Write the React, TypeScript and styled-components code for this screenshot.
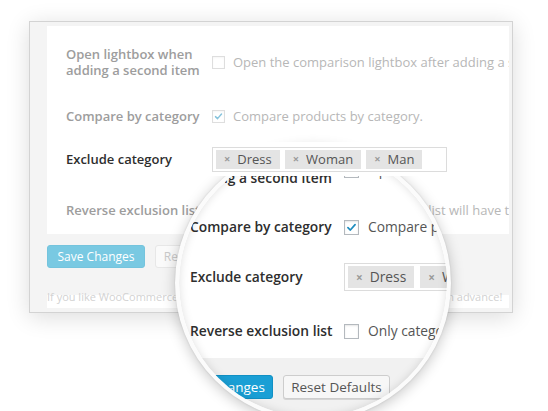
import React from "react";
import styled, { createGlobalStyle, css } from "styled-components";

const GlobalStyle = createGlobalStyle`
  html, body { margin: 0; padding: 0; background: #fff; }
  body { font-family: "Open Sans", "Liberation Sans", sans-serif; }
  *, *::before, *::after { box-sizing: border-box; }
`;

type Variant = "panel" | "lens";
type Tone = "muted" | "strong";

const palette = {
  muted: { label: "#9d9d9d", text: "#b7b7b7", box: "#dedede", check: "#86c3dc", tag: "#ededed", tagText: "#b0b0b0" },
  strong: { label: "#2e2e2e", text: "#555", box: "#b4b9be", check: "#1e8cbe", tag: "#e4e4e4", tagText: "#555" },
};

const sizes = {
  panel: { font: 13, line: 16, labelCol: 146, check: 13, gap: 8, tagH: 19, tagPad: 8, boxH: 25, rows: [72, 36, 34, 36] },
  lens: { font: 13.8, line: 16, labelCol: 154, check: 15, gap: 9, tagH: 22, tagPad: 8, boxH: 28, rows: [70, 44, 56, 52] },
};

const Stage = styled.div`
  position: relative;
  width: 548px;
  height: 411px;
  overflow: hidden;
  background: #fff;
  padding: 21px 0 0 29px;
`;

const Panel = styled.section`
  width: 484px;
  height: 292px;
  border: 1px solid #d3d3d3;
  background: #f4f4f4;
  box-shadow: 0 4px 22px rgba(0, 0, 0, 0.14);
  padding: 4px 3px 0 17px;
  display: flex;
  flex-direction: column;
`;

const FormTable = styled.div<{ $variant: Variant }>`
  background: #fff;
  display: flex;
  flex-direction: column;
  overflow: hidden;
  ${({ $variant }) =>
    $variant === "panel"
      ? css`
          height: 208px;
          padding: 0 0 6px 19px;
        `
      : css`
          width: 420px;
          padding: 0 0 1px 20px;
        `}
`;

const Row = styled.div<{ $variant: Variant; $h: number; $raised?: boolean }>`
  display: flex;
  align-items: center;
  height: ${({ $h }) => $h}px;
  flex-shrink: 0;
  white-space: nowrap;
  font-size: ${({ $variant }) => sizes[$variant].font}px;
  line-height: ${({ $variant }) => sizes[$variant].line}px;
  ${({ $raised }) =>
    $raised &&
    css`
      position: relative;
      z-index: 2;
      background: #fff;
      margin: 8px 0 16px -19px;
      padding-left: 19px;
    `}
`;

const Label = styled.div<{ $variant: Variant; $tone: Tone }>`
  width: ${({ $variant }) => sizes[$variant].labelCol}px;
  flex-shrink: 0;
  font-weight: 600;
  color: ${({ $tone }) => palette[$tone].label};
  span { display: block; }
`;

const Field = styled.div`
  display: flex;
  align-items: center;
`;

const Box = styled.span<{ $variant: Variant; $tone: Tone }>`
  width: ${({ $variant }) => sizes[$variant].check}px;
  height: ${({ $variant }) => sizes[$variant].check}px;
  flex-shrink: 0;
  display: inline-flex;
  align-items: center;
  justify-content: center;
  border: 1px solid ${({ $tone }) => palette[$tone].box};
  background: #fff;
  box-shadow: inset 0 1px 2px rgba(0, 0, 0, ${({ $tone }) => ($tone === "strong" ? 0.1 : 0.04)});
  margin-right: ${({ $variant }) => sizes[$variant].gap}px;
  svg { width: 100%; height: 100%; }
`;

const Desc = styled.span<{ $tone: Tone }>`
  color: ${({ $tone }) => palette[$tone].text};
`;

const TagBox = styled.div<{ $variant: Variant }>`
  display: flex;
  align-items: center;
  gap: ${({ $variant }) => ($variant === "panel" ? 5 : 6)}px;
  height: ${({ $variant }) => sizes[$variant].boxH}px;
  width: ${({ $variant }) => ($variant === "panel" ? "235px" : "auto")};
  padding: 0 3px;
  border: 1px solid #dcdcdc;
  background: #fff;
`;

const Tag = styled.span<{ $variant: Variant; $tone: Tone }>`
  display: inline-flex;
  align-items: center;
  gap: 7px;
  height: ${({ $variant }) => sizes[$variant].tagH}px;
  padding: 0 ${({ $variant }) => sizes[$variant].tagPad}px;
  background: ${({ $tone }) => palette[$tone].tag};
  color: ${({ $tone }) => palette[$tone].tagText};
  b {
    font-weight: 700;
    font-size: 0.85em;
    color: #9a9a9a;
  }
`;

const Footer = styled.div<{ $variant: Variant }>`
  display: flex;
  flex-direction: column;
  ${({ $variant }) =>
    $variant === "panel"
      ? css`
          padding-top: 11px;
        `
      : css`
          padding-top: 17px;
          background: #f1f1f1;
          height: 80px;
        `}
`;

const Buttons = styled.div<{ $variant: Variant }>`
  display: flex;
  gap: 10px;
  font-size: ${({ $variant }) => ($variant === "panel" ? 12 : 13.5)}px;
`;

const Button = styled.button<{ $variant: Variant; $primary?: boolean }>`
  font-family: inherit;
  font-size: inherit;
  height: ${({ $variant }) => ($variant === "panel" ? 23 : 24)}px;
  width: ${({ $variant }) => ($variant === "panel" ? 98 : 103)}px;
  padding: 0 6px;
  border-radius: 3px;
  white-space: nowrap;
  ${({ $variant, $primary }) =>
    $primary
      ? $variant === "panel"
        ? css`
            background: #79c9e2;
            border: 1px solid #74c4dd;
            color: #fff;
          `
        : css`
            background: #1a9fd5;
            border: 1px solid #1190c4;
            color: #fff;
          `
      : $variant === "panel"
      ? css`
          background: #fafafa;
          border: 1px solid #e7e7e7;
          color: #c9c9c9;
        `
      : css`
          width: 107px;
          background: #f7f7f7;
          border: 1px solid #cdcdcd;
          color: #555;
          box-shadow: 0 1px 0 #d5d5d5;
        `}
`;

const Note = styled.div`
  margin-top: 22px;
  padding-top: 1px;
  height: 18px;
  background: linear-gradient(#f4f4f4 0 5px, #fff 5px);
  font-size: 11px;
  line-height: 12px;
  color: #d2d2d2;
  white-space: nowrap;
  overflow: hidden;
`;

/* Magnifier glass laid over the settings panel */
const Lens = styled.div`
  position: absolute;
  left: 175px;
  top: 145px;
  width: 276px;
  height: 276px;
  border-radius: 50%;
  border: 4px solid #fbfbfb;
  overflow: hidden;
  background: #fff;
  box-shadow: 0 3px 14px rgba(0, 0, 0, 0.22), 0 0 2px rgba(0, 0, 0, 0.12);
  z-index: 1;
  &::after {
    content: "";
    position: absolute;
    inset: 0;
    border-radius: 50%;
    box-shadow: inset 0 0 10px rgba(0, 0, 0, 0.13);
    pointer-events: none;
  }
`;

const LensSheet = styled.div`
  position: absolute;
  left: -9px;
  top: -14px;
  width: 420px;
`;

const Check = ({ color }: { color: string }) => (
  <svg viewBox="0 0 16 16" fill="none">
    <path d="M3.6 8.2 L6.6 11.1 L12.4 4.4" stroke={color} strokeWidth="2.1" strokeLinecap="round" strokeLinejoin="round" />
  </svg>
);

type RowData =
  | { label: string[]; kind: "check"; checked: boolean; text: string }
  | { label: string[]; kind: "tags"; tags: string[] };

const rows: RowData[] = [
  {
    label: ["Open lightbox when", "adding a second item"],
    kind: "check",
    checked: false,
    text: "Open the comparison lightbox after adding a second item to compare",
  },
  { label: ["Compare by category"], kind: "check", checked: true, text: "Compare products by category." },
  { label: ["Exclude category"], kind: "tags", tags: ["Dress", "Woman", "Man"] },
  {
    label: ["Reverse exclusion list"],
    kind: "check",
    checked: false,
    text: "Only categories in the exclusion list will have the compare feature",
  },
];

const SettingsForm = ({ variant }: { variant: Variant }) => (
  <FormTable $variant={variant}>
    {rows.map((row, i) => {
      const raised = variant === "panel" && row.kind === "tags";
      const tone: Tone = variant === "lens" || raised ? "strong" : "muted";
      return (
        <Row key={i} $variant={variant} $h={sizes[variant].rows[i]} $raised={raised}>
          <Label $variant={variant} $tone={tone}>
            {row.label.map((l) => (
              <span key={l}>{l}</span>
            ))}
          </Label>
          <Field>
            {row.kind === "check" ? (
              <>
                <Box $variant={variant} $tone={tone}>
                  {row.checked && <Check color={palette[tone].check} />}
                </Box>
                <Desc $tone={tone}>{row.text}</Desc>
              </>
            ) : (
              <TagBox $variant={variant}>
                {row.tags.map((t) => (
                  <Tag key={t} $variant={variant} $tone={tone}>
                    <b>×</b>
                    {t}
                  </Tag>
                ))}
              </TagBox>
            )}
          </Field>
        </Row>
      );
    })}
  </FormTable>
);

const FormButtons = ({ variant }: { variant: Variant }) => (
  <Buttons $variant={variant}>
    <Button $variant={variant} $primary>
      Save Changes
    </Button>
    <Button $variant={variant}>Reset Defaults</Button>
  </Buttons>
);

export default function App() {
  return (
    <>
      <GlobalStyle />
      <Stage>
        <Panel>
          <SettingsForm variant="panel" />
          <Footer $variant="panel">
            <FormButtons variant="panel" />
            <Note>If you like WooCommerce Products Compare please leave us a rating. Thanks in advance!</Note>
          </Footer>
        </Panel>
        <Lens>
          <LensSheet>
            <SettingsForm variant="lens" />
            <Footer $variant="lens">
              <FormButtons variant="lens" />
            </Footer>
          </LensSheet>
        </Lens>
      </Stage>
    </>
  );
}
